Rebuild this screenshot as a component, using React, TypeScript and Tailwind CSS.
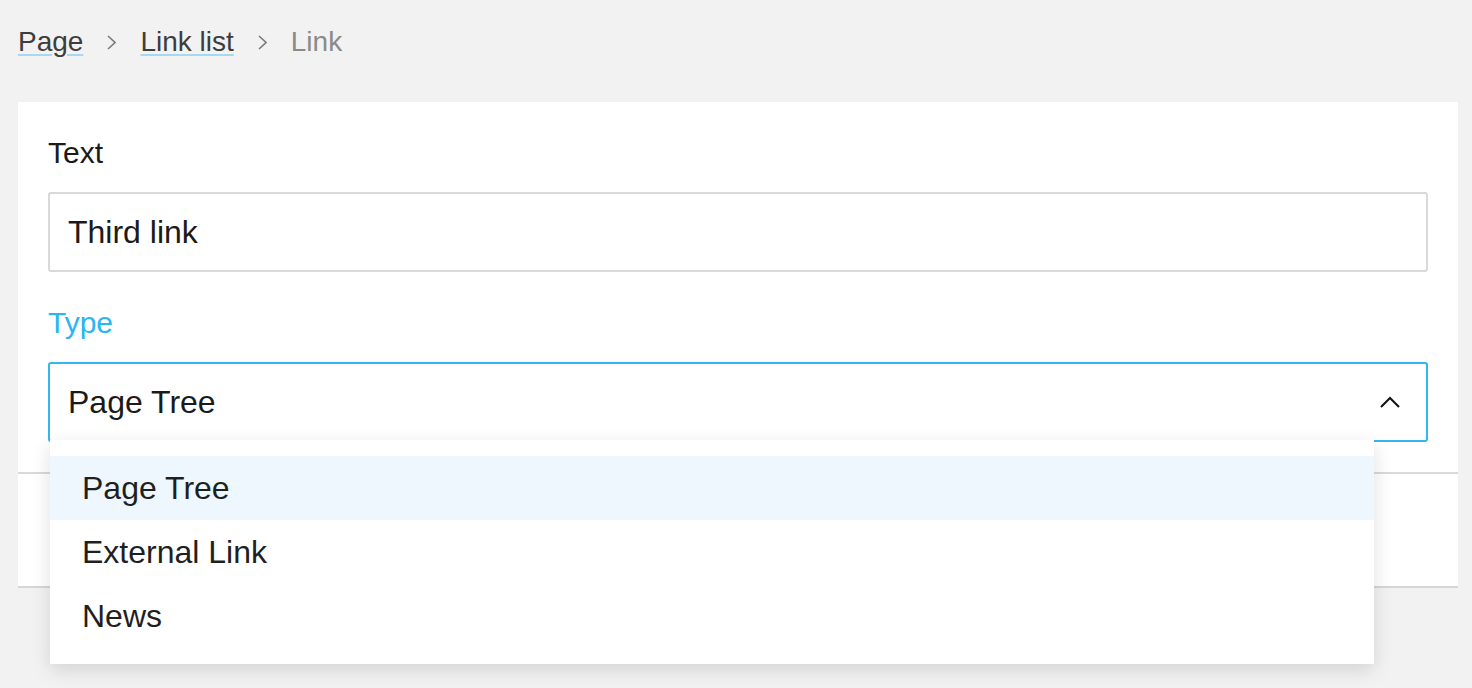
import React from "react";

const font = { fontFamily: '"Liberation Sans", Arial, sans-serif' };

function Chevron() {
  return (
    <svg width="9" height="15" viewBox="0 0 9 15" fill="none">
      <polyline points="1,1 8,7.5 1,14" stroke="#7a7a7a" strokeWidth="1.6" />
    </svg>
  );
}

export default function App() {
  return (
    <div className="min-h-[688px] bg-[#f2f2f2] pl-[18px] pr-[14px] pt-[24px]" style={font}>
      <nav className="flex h-[36px] items-center gap-[24px] text-[28px] leading-[36px]">
        <span className="text-[#3d3d3d] underline decoration-[#a3d9f1] decoration-2 underline-offset-[3px]">Page</span>
        <Chevron />
        <span className="text-[#3d3d3d] underline decoration-[#a3d9f1] decoration-2 underline-offset-[3px]">Link list</span>
        <Chevron />
        <span className="text-[#8a8a8a]">Link</span>
      </nav>

      <div className="mt-[42px] border-b-2 border-[#d6d6d6] bg-white">
        <div className="flex flex-col gap-[33px] border-b-2 border-[#d9d9d9] px-[30px] pt-[33px] pb-[30px]">
          <div className="flex flex-col gap-[21px]">
            <label className="h-[36px] text-[30px] leading-[36px] text-[#1a1a1a]">Text</label>
            <div className="flex h-[80px] items-center rounded-[3px] border-2 border-[#d9d9d9] px-[18px] text-[32px] leading-[40px] text-[#1a1a1a]">
              Third link
            </div>
          </div>
          <div className="flex flex-col gap-[21px]">
            <label className="h-[36px] text-[30px] leading-[36px] text-[#2bb5f3]">Type</label>
            <div className="relative">
              <div className="flex h-[80px] items-center justify-between rounded-[3px] border-2 border-[#33b6f0] pl-[18px] pr-[26px] text-[32px] leading-[40px] text-[#1a1a1a]">
                <span>Page Tree</span>
                <svg width="20" height="12" viewBox="0 0 20 12" fill="none">
                  <polyline points="1,11 10,2 19,11" stroke="#111" strokeWidth="2" />
                </svg>
              </div>
              <div className="absolute left-[2px] right-[54px] top-[78px] z-10 bg-white py-[16px] shadow-[0_6px_18px_rgba(0,0,0,0.13)]">
                <div className="flex h-[64px] items-center bg-[#eef7fd] px-[32px] text-[32px] leading-[40px] text-[#1f1f1f]">Page Tree</div>
                <div className="flex h-[64px] items-center px-[32px] text-[32px] leading-[40px] text-[#1f1f1f]">External Link</div>
                <div className="flex h-[64px] items-center px-[32px] text-[32px] leading-[40px] text-[#1f1f1f]">News</div>
              </div>
            </div>
          </div>
        </div>
        <div className="h-[112px]" />
      </div>
    </div>
  );
}
